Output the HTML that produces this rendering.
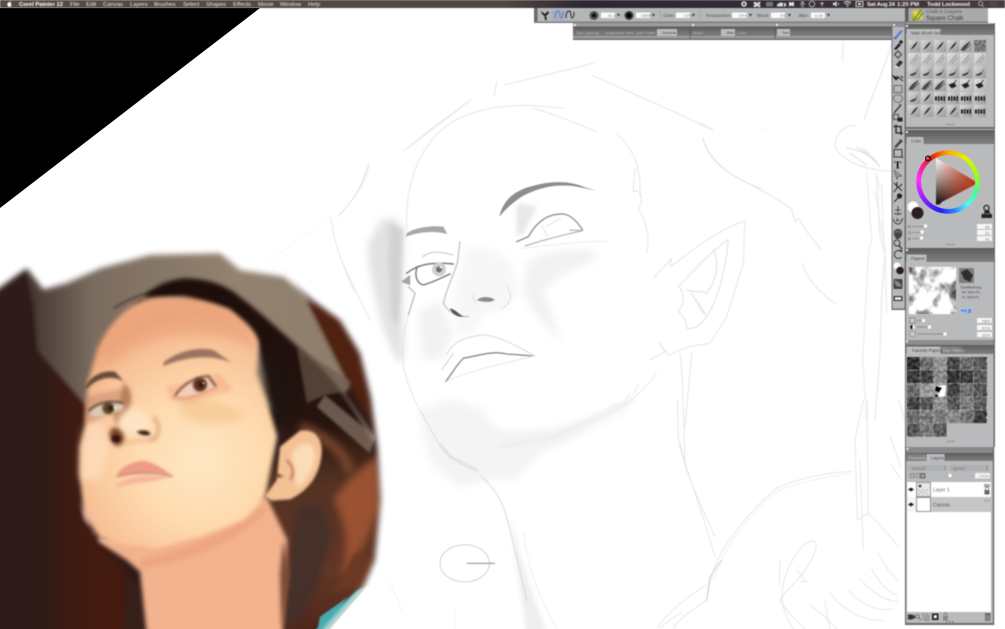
<!DOCTYPE html>
<html><head><meta charset="utf-8"><style>
html,body{margin:0;padding:0;background:#fff;width:1005px;height:629px;overflow:hidden}
svg{position:absolute;left:0;top:0}
text{font-family:"Liberation Sans",sans-serif}
#wheel{position:absolute;left:915.5px;top:150px;width:64px;height:64px;border-radius:50%;background:conic-gradient(from 0deg,#ffa800,#e8f000 35deg,#90ff20 80deg,#40ff90 110deg,#50f8ff 140deg,#2878ff 170deg,#2020f0 195deg,#9020ff 235deg,#ff30ff 275deg,#f02060 310deg,#e81808 325deg,#ffa800);-webkit-mask:radial-gradient(circle,transparent 26.5px,#000 27.5px,#000 31.5px,transparent 32.5px);mask:radial-gradient(circle,transparent 26.5px,#000 27.5px,#000 31.5px,transparent 32.5px);filter:blur(.5px)}
</style></head><body>
<svg width="1005" height="629" viewBox="0 0 1005 629" xmlns="http://www.w3.org/2000/svg">
<defs>
<filter id="b1" x="-40%" y="-40%" width="180%" height="180%" color-interpolation-filters="sRGB"><feGaussianBlur stdDeviation="3"/></filter>
<filter id="b2" x="-40%" y="-40%" width="180%" height="180%" color-interpolation-filters="sRGB"><feGaussianBlur stdDeviation="6"/></filter>
<filter id="b3" x="-10%" y="-10%" width="120%" height="120%" color-interpolation-filters="sRGB"><feGaussianBlur stdDeviation="9"/></filter>
<filter id="b4" x="-50%" y="-50%" width="200%" height="200%" color-interpolation-filters="sRGB"><feGaussianBlur stdDeviation="12"/></filter>
<filter id="b8" x="-60%" y="-60%" width="220%" height="220%" color-interpolation-filters="sRGB"><feGaussianBlur stdDeviation="24"/></filter>
<filter id="ph" filterUnits="userSpaceOnUse" x="-60" y="-60" width="1300" height="1300" color-interpolation-filters="sRGB"><feGaussianBlur stdDeviation="2"/></filter>
<filter id="sk" filterUnits="userSpaceOnUse" x="0" y="0" width="1005" height="629" color-interpolation-filters="sRGB"><feGaussianBlur stdDeviation=".6"/></filter>
<filter id="ui" x="-2%" y="-2%" width="104%" height="104%" color-interpolation-filters="sRGB"><feGaussianBlur stdDeviation=".5"/></filter>
<filter id="nz" x="0" y="0" width="100%" height="100%" color-interpolation-filters="sRGB"><feTurbulence type="fractalNoise" baseFrequency=".3" numOctaves="3" seed="4"/><feColorMatrix values="2.4 0 0 0 -.7 2.4 0 0 0 -.7 2.4 0 0 0 -.7 0 0 0 0 1"/></filter>
<filter id="cl" x="0" y="0" width="100%" height="100%" color-interpolation-filters="sRGB"><feTurbulence type="fractalNoise" baseFrequency=".06" numOctaves="4" seed="9"/><feColorMatrix values="2.4 0 0 0 -.25 2.4 0 0 0 -.25 2.4 0 0 0 -.25 0 0 0 0 1"/></filter>
<filter id="fine" x="0" y="0" width="100%" height="100%" color-interpolation-filters="sRGB"><feTurbulence type="fractalNoise" baseFrequency=".9" numOctaves="2" seed="3"/><feColorMatrix values="2 0 0 0 -.5 2 0 0 0 -.5 2 0 0 0 -.5 0 0 0 0 1"/></filter>
<mask id="pm" maskUnits="userSpaceOnUse" x="-100" y="-100" width="1500" height="1500"><path filter="url(#b3)" fill="#fff" d="M-60,185 L80,85 L130,150 L200,130 L300,85 L450,45 L660,40 L720,90 L850,110 L950,190 L1020,240 L1080,340 L1112,470 L1132,620 L1142,780 L1124,960 L1090,1040 L940,1210 L-60,1210Z"/></mask>
<linearGradient id="rb" x1="0" x2="1" y1="0" y2="0"><stop offset="0" stop-color="#2e1b1a"/><stop offset=".3" stop-color="#2f1b18"/><stop offset=".6" stop-color="#3f1b12"/><stop offset="1" stop-color="#471b0e"/></linearGradient>
<linearGradient id="wl" x1="0" x2="1" y1="0" y2="0"><stop offset="0" stop-color="#3f302c"/><stop offset=".2" stop-color="#7b6c60"/><stop offset=".6" stop-color="#93826f"/><stop offset="1" stop-color="#8d7c6c"/></linearGradient>
<linearGradient id="hr" x1="0" x2="0" y1="0" y2="1"><stop offset="0" stop-color="#1c0e0b"/><stop offset=".4" stop-color="#27140f"/><stop offset=".56" stop-color="#543222"/><stop offset=".8" stop-color="#643726"/><stop offset="1" stop-color="#4a2417"/></linearGradient>
<radialGradient id="fc" gradientUnits="userSpaceOnUse" cx="600" cy="660" r="440"><stop offset="0" stop-color="#ffe8c4"/><stop offset=".45" stop-color="#fedaae"/><stop offset=".8" stop-color="#f8c298"/><stop offset="1" stop-color="#eeaa80"/></radialGradient>
<linearGradient id="nk" x1="0" x2="0" y1="0" y2="1"><stop offset="0" stop-color="#f3b28c"/><stop offset="1" stop-color="#f4b490"/></linearGradient>
<linearGradient id="top" x1="0" x2="1" y1="0" y2="0"><stop offset="0" stop-color="#554c43"/><stop offset=".5" stop-color="#514842"/><stop offset=".58" stop-color="#2d2731"/><stop offset=".75" stop-color="#332c36"/><stop offset="1" stop-color="#473d3c"/></linearGradient>
<linearGradient id="hd" x1="0" x2="0" y1="0" y2="1"><stop offset="0" stop-color="#5b5b5b"/><stop offset=".5" stop-color="#6f6f6f"/><stop offset="1" stop-color="#808080"/></linearGradient>
<linearGradient id="cell" x1="0" x2="1" y1="0" y2="1"><stop offset="0" stop-color="#dcdcdd"/><stop offset="1" stop-color="#979799"/></linearGradient>
<linearGradient id="cell2" x1="0" x2="1" y1="0" y2="1"><stop offset="0" stop-color="#e3e3e4"/><stop offset="1" stop-color="#b5b5b7"/></linearGradient>
<linearGradient id="tw" x1="0" x2="0" y1="158" y2="205" gradientUnits="userSpaceOnUse"><stop offset="0" stop-color="#fff"/><stop offset=".45" stop-color="#a89a96"/><stop offset="1" stop-color="#0a0505"/></linearGradient>
<linearGradient id="tr" x1="936" x2="978" y1="0" y2="0" gradientUnits="userSpaceOnUse"><stop offset="0" stop-color="#c53210" stop-opacity="0"/><stop offset="1" stop-color="#c12d0c" stop-opacity="1"/></linearGradient>
<linearGradient id="ch" x1="0" x2="1" y1="1" y2="0"><stop offset="0" stop-color="#7c8c30"/><stop offset=".5" stop-color="#e3d850"/><stop offset="1" stop-color="#9aa548"/></linearGradient>
<symbol id="s1" viewBox="0 0 12 12" overflow="visible"><rect width="12" height="12" fill="url(#cell)"/><path d="M2.5,10 C4,7 7,3.5 9.5,1.5 C9,4.5 6,8 2.5,10Z" fill="#252525"/></symbol>
<symbol id="s2" viewBox="0 0 12 12" overflow="visible"><rect width="12" height="12" fill="url(#cell2)"/><path d="M2,10.5 L9.5,1.5 M5,10.5 L10.5,4" stroke="#8a8a8c" stroke-width=".8" fill="none"/></symbol>
<symbol id="s3" viewBox="0 0 12 12" overflow="visible"><rect width="12" height="12" fill="url(#cell)"/><path d="M1.5,9 C4,7.5 6,7.5 8,6 L10.5,1.5 L8,7.5 C6,10 3,10 1.5,9Z" fill="#333"/></symbol>
<symbol id="s4" viewBox="0 0 12 12" overflow="visible"><rect width="12" height="12" fill="url(#cell2)"/><path d="M2,6 L5,9 L9,7 L7,4 Z M9.5,1 L5,7" fill="#222" stroke="#222" stroke-width=".8"/></symbol>
<symbol id="s5" viewBox="0 0 12 12" overflow="visible"><rect width="12" height="12" fill="url(#cell)"/><path d="M1,4.5h2v4H1zM4,4h1.5v5H4zM6.5,4.5h2v4h-2zM9.5,4h1.5v5H9.5z" fill="#1e1e1e"/></symbol>
<symbol id="sd" viewBox="0 0 12 12" overflow="visible"><rect width="12" height="12" fill="url(#cell)"/><path d="M1,10 L4,6 L10,1.5 L6.5,7 L3,10.5Z M4,11 L11,4" fill="#4a4a4a" stroke="#333" stroke-width=".6"/></symbol>
<clipPath id="gclip"><path d="M907,357h80v53h-80zM907,410h40v27h-40zM947,410h40v13h-40z"/></clipPath>
<clipPath id="pclip"><rect x="909" y="267" width="47" height="47" rx="1"/></clipPath>
</defs>

<rect width="1005" height="629" fill="#fff"/>
<path d="M0,8 L260,8 L0,208Z" fill="#000"/>

<g filter="url(#sk)">
<g transform="translate(340,60) scale(.33333)">
<path d="M125,480 C165,465 182,490 192,510 L186,640 L190,900 C175,925 150,860 125,790 C105,700 80,600 85,550Z" fill="#e2e2e3" filter="url(#b4)"/>
<path d="M150,490 L188,510 L182,700 L172,800 L155,770 L145,600Z" fill="#d2d2d3" filter="url(#b2)"/>
<path d="M560,610 C600,580 700,560 755,570 L770,600 C700,625 650,650 610,690 L665,850 C620,800 575,760 550,690Z" fill="#f2f2f3" filter="url(#b4)"/>
<path d="M375,570 C420,550 490,575 515,615 L535,690 L500,740 L430,765 L400,820 L350,825 L335,720Z" fill="#f7f7f8" filter="url(#b4)"/>
<path d="M235,760 L300,720 L340,820 L300,900 L250,900Z" fill="#f2f2f3" filter="url(#b4)"/>
<path d="M530,430 L590,440 L550,520 L530,530Z" fill="#e8e8e9" filter="url(#b2)"/>
<path d="M300,1020 C340,1030 385,1010 380,1060 C390,1100 500,1145 750,1095 C660,1170 520,1180 440,1210 L345,1210 C315,1150 290,1080 300,1020Z" fill="#f5f5f6" filter="url(#b4)"/>
<g fill="none" stroke="#e2e2e2" stroke-width="2.6" stroke-linecap="round" stroke-linejoin="round">
<path d="M200,510 C195,380 230,260 330,190 C430,130 550,130 670,145"/>
<path d="M580,145 C640,160 720,195 770,215"/>
<path d="M195,270 C260,215 330,165 395,118"/>
<path d="M462,110 L470,65"/>
<path d="M495,75 L760,10"/>
<path d="M755,45 C850,90 1000,150 1115,210"/>
<path d="M1088,235 C1110,310 1190,360 1262,385"/>
<path d="M828,220 C880,265 905,320 900,410"/>
<path d="M885,325 L880,395 C910,385 910,430 895,445 C920,490 930,530 920,580"/>
<path d="M85,315 C70,370 40,420 0,465"/>
<path d="M0,590 C30,660 70,740 90,780"/>
<path d="M940,655 L995,595 L990,620 C1060,570 1130,510 1215,482 L1210,610 L1160,770 L1110,850 L1045,860 L985,885 L955,845 L975,875 L930,900"/>
<path d="M1035,660 C1080,610 1120,570 1165,538 C1160,610 1140,690 1115,745 C1090,790 1070,810 1040,805 C1040,770 1020,770 1015,750 C1040,730 1030,690 1015,680Z" stroke="#dcdcdc"/>
<path d="M1120,570 C1140,610 1130,660 1100,700 M1040,690 C1060,700 1090,690 1100,700 M1070,720 L1100,770 M1055,700 L1090,760" stroke="#e6e6e6" stroke-width="4"/>
<path d="M1020,880 C1030,950 1030,1080 1035,1200"/>
<path d="M1056,875 L1035,1100"/>
<path d="M205,770 C190,820 180,880 195,940 C220,1030 270,1110 320,1170 L345,1200"/>
<path d="M740,1090 C830,1060 900,1010 950,940" stroke="#e8e8e8"/>
<path d="M800,1050 L830,1030 M850,1030 L870,1000 M880,1005 L895,975" stroke="#e8e8e8"/>
</g>
<path d="M478,470 C490,420 520,395 570,380 C620,365 680,358 735,382 L770,392 L700,378 C640,372 590,385 545,410 C515,430 490,455 478,470Z" fill="#8d8d8f"/>
<path d="M200,520 C220,505 270,495 310,500 L322,522 C280,510 230,518 198,530Z" fill="#a8a8a9"/>
<g fill="none" stroke-linecap="round">
<path d="M530,545 L565,530 C590,485 625,460 670,462 C695,465 715,490 728,510" stroke="#8e8e90" stroke-width="4"/>
<path d="M555,558 C610,540 670,525 728,512 L690,510" stroke="#a8a8aa" stroke-width="3"/>
<path d="M605,495 L622,528 M620,500 L660,475" stroke="#dedede" stroke-width="2.5"/>
<path d="M545,565 C600,560 740,540 800,545" stroke="#ececec" stroke-width="3"/>
<path d="M200,640 C230,615 270,605 340,612" stroke="#7c7c7e" stroke-width="4.5"/>
<path d="M232,620 C222,645 230,670 250,675 C285,665 310,650 330,642" stroke="#707072" stroke-width="4"/>
<path d="M248,590 C275,570 300,575 340,585" stroke="#c6c6c7" stroke-width="3"/>
<path d="M360,545 L352,610 L318,700 L310,730 C325,755 345,770 385,770" stroke="#c4c4c6" stroke-width="4"/>
<path d="M205,680 L225,700 L205,765" stroke="#bcbcbe" stroke-width="4"/>
<path d="M185,665 L210,645 L210,675Z" fill="#a4a4a6" stroke="#a4a4a6"/>
</g>
<circle cx="297" cy="628" r="21" fill="#cfcfd1"/><circle cx="297" cy="628" r="9" fill="#6c6c6e"/><circle cx="302" cy="622" r="3.5" fill="#eee"/>
<path d="M330,745 C340,745 355,760 370,770 C350,772 335,760 330,745Z" fill="#55555a"/>
<path d="M410,720 C425,708 450,708 465,720 C445,730 425,725 410,720Z" fill="#8c8c8e"/>
<path d="M500,680 C525,710 505,740 480,748 M410,730 C400,720 395,710 405,700" fill="none" stroke="#dcdcdc" stroke-width="3"/>
<g fill="none" stroke-linecap="round" stroke-linejoin="round">
<path d="M317,965 C340,935 345,920 370,895 C420,885 460,872 500,882 L582,888" stroke="#88888a" stroke-width="4"/>
<path d="M318,885 C335,855 360,835 400,830 C440,815 490,835 580,885" stroke="#dadadb" stroke-width="3"/>
<path d="M318,965 C390,930 500,910 580,888" stroke="#e6e6e6" stroke-width="3"/>
<path d="M340,880 L305,930" stroke="#cecece" stroke-width="3"/>
</g>
</g>

<g transform="translate(260,60) scale(.33333)" fill="none" stroke="#e6e6e6" stroke-width="2.6" stroke-linecap="round">
<path d="M328,312 C315,370 280,425 232,470"/>
<path d="M213,472 C220,550 255,630 285,700"/>
<path d="M210,470 L20,610" stroke="#f6f6f6"/>
<path d="M432,272 L600,145"/>
</g>

<g transform="translate(380,400) scale(.33333)">
<path d="M120,20 L300,20 L350,90 C420,110 560,90 750,10 C720,60 560,110 480,160 L400,240 L320,240 L240,260 L160,200 C130,130 120,70 120,20Z" fill="#f4f4f5" filter="url(#b4)"/>
<path d="M385,330 C405,420 435,520 500,700 L440,700 C420,560 400,430 385,330Z" fill="#eeeeef" filter="url(#b2)"/>
<path d="M120,30 L170,120 C200,170 240,195 295,215" fill="none" stroke="#e4e4e5" stroke-width="4"/>
<path d="M180,130 L210,170 L290,210" fill="none" stroke="#dadadb" stroke-width="5" filter="url(#b1)"/>
<path d="M300,225 C345,265 370,305 385,370 L412,480 L440,600" fill="none" stroke="#dadadb" stroke-width="3"/>
<path d="M432,400 C435,470 470,580 530,687" fill="none" stroke="#f0f0f0" stroke-width="3"/>
<path d="M360,140 L520,110 L760,0" fill="none" stroke="#ececed" stroke-width="10" filter="url(#b2)"/>
<ellipse cx="254" cy="490" rx="74" ry="56" fill="none" stroke="#cdcdcd" stroke-width="2.6"/>
<path d="M260,490 L345,490" stroke="#8a8a8a" stroke-width="3"/>
<g fill="none" stroke="#e4e4e4" stroke-width="2.6" stroke-linecap="round">
<path d="M892,0 L895,110 C905,190 950,290 1005,410"/>
<path d="M900,130 C920,220 960,310 1005,470"/>
<path d="M1415,215 C1340,215 1240,240 1190,265 C1120,320 1050,410 1015,475 C990,530 985,570 980,605"/>
<path d="M1405,222 C1320,235 1220,250 1170,290 C1100,360 1040,430 1000,540" stroke="#eeeeee"/>
<path d="M1025,480 L990,530 L980,600" stroke="#c8c8c9"/>
<path d="M980,555 C920,590 870,630 830,685 M980,600 C940,630 900,650 880,685 M905,640 C880,650 860,665 840,685"/>
<path d="M30,545 L70,640 M225,630 L225,687" stroke="#f2f2f2"/>
<path d="M1305,425 C1280,415 1240,460 1215,530 C1200,590 1200,620 1240,687 M1305,425 C1320,440 1285,500 1260,530 C1235,560 1205,585 1200,600 C1215,630 1250,660 1275,687"/>
<path d="M1200,480 L1198,560 M1250,510 L1280,545 L1260,545"/>
<path d="M1290,615 C1320,640 1350,660 1370,687 M1350,580 C1390,630 1440,660 1510,662 M1405,570 C1440,610 1490,640 1540,625 M1440,535 C1470,575 1510,600 1552,605 M1475,505 C1490,540 1520,575 1552,585 M1495,460 C1510,490 1530,520 1555,545 M1335,605 L1350,687"/>
<path d="M1462,0 L1462,110 M1450,0 L1425,120 L1432,360 L1465,340 L1462,110 M1440,180 L1450,450 M1462,340 C1490,360 1530,410 1552,435 M1530,110 C1545,150 1555,170 1560,200 M1535,195 L1560,235"/>
</g>
</g>

<g transform="translate(700,20) scale(.33333)" fill="none" stroke="#e0e0e0" stroke-width="2.6" stroke-linecap="round" stroke-linejoin="round">
<path d="M428,65 L428,125"/>
<path d="M0,310 C15,315 30,320 40,330" stroke="#eaeaea"/>
<path d="M8,355 C25,420 80,460 145,490 C200,520 240,540 275,568 L285,605 L295,595 L325,640 L362,688"/>
<path d="M308,730 C325,790 370,825 408,852"/>
<path d="M175,328 L195,330" stroke="#f0f0f0"/>
<path d="M575,70 C560,130 520,215 492,298"/>
<path d="M470,318 C430,312 405,345 405,375 C410,395 420,405 445,420 C480,445 530,450 576,455"/>
<path d="M440,385 C490,390 515,410 540,440 M470,380 L505,405 M490,385 L530,425 M450,400 L500,435" stroke="#d8d8d8"/>
<path d="M530,470 L540,650 L555,700 L545,830 L540,1000 L525,1200"/>
<path d="M525,515 L555,690 L560,880 M545,490 L552,680 M500,460 L515,660 L505,700 L488,1020 L500,1200 M530,460 L540,510" stroke="#e6e6e6"/>
<path d="M595,1140 L615,1200"/>
</g>
</g>

<!-- photo -->
<g transform="translate(0,240) scale(.33333)" mask="url(#pm)"><g filter="url(#ph)">
<rect x="-20" y="0" width="1250" height="1230" fill="#fff"/>
<path d="M-40,100 L90,40 L1170,40 L1190,1230 L-40,1230Z" fill="#2e1b1a"/>
<path d="M0,320 L110,320 L270,500 L240,800 L380,1000 L380,1230 L0,1230Z" fill="url(#rb)" filter="url(#b4)"/>
<path d="M70,70 L130,150 L200,120 L300,60 L450,20 L660,20 L720,70 L860,90 L940,190 L1060,430 L1030,460 L1125,590 L1100,640 L800,500 L700,250 L420,180 L300,310 L260,500 L110,330 L100,200Z" fill="url(#wl)" filter="url(#b2)"/>
<path d="M920,180 L1030,230 L1090,340 L1125,570 L1050,440 Z" fill="#4e2111" filter="url(#b2)"/>
<!-- hair -->
<path d="M300,310 C330,260 370,220 420,190 L370,240 L300,340Z" fill="#5e4538" filter="url(#b2)"/>
<path d="M340,205 C380,180 420,165 470,150" stroke="#4e3a30" stroke-width="5" fill="none" filter="url(#b1)"/>
<path d="M430,175 C450,145 500,118 560,115 C620,118 660,130 700,155 C800,230 880,310 960,380 C1030,450 1100,560 1135,650 L1150,800 L1125,960 L1095,1040 L945,1170 L830,1210 L840,1000 L850,900 L780,760 L860,580 L770,300 L690,210 L550,170Z" fill="url(#hr)" filter="url(#b2)"/>
<path d="M890,320 L1055,425 L1030,455 L975,465 L920,490 Z" fill="#6d5a4d" opacity=".65" filter="url(#b1)"/>
<path d="M975,465 L1125,590 L1110,640 L950,500Z" fill="#8a7567" opacity=".7" filter="url(#b1)"/>
<path d="M1000,780 C1030,730 1075,690 1130,650 L1145,790 L1100,900 L1020,1025 C1040,950 1050,870 1000,780Z" fill="#9a5232" filter="url(#b4)"/>
<path d="M900,560 C980,590 1040,640 1050,700" fill="none" stroke="#7a4830" stroke-width="28" filter="url(#b4)"/>
<path d="M880,870 L895,800 L960,790 L995,880 L955,1030 L900,1140 L850,1160 Z" fill="#45302a" filter="url(#b4)"/>
<path d="M1060,940 C1050,990 1010,1040 990,1060 L1090,1040 L1120,950Z" fill="#6b3823" filter="url(#b2)"/>
<path d="M780,320 L900,460 L830,580 L800,470Z" fill="#1f1410" filter="url(#b4)"/>
<path d="M375,1010 L420,1040 L445,1230 L370,1230Z" fill="#38201a" filter="url(#b2)"/>
<!-- neck -->
<path d="M380,960 L290,900 L800,770 L862,900 L845,1230 L445,1230 L420,995Z" fill="url(#nk)" filter="url(#b2)"/>
<path d="M840,1000 L850,900 L870,1000 L845,1170 Z" fill="#7a4a34" filter="url(#b2)"/>
<!-- teal -->
<path d="M945,1170 L1070,1052 L1095,1040 L980,1170Z" fill="#4fb2b2"/>
<path d="M960,1130 L1045,1070 L950,1180Z" fill="#47a9ac"/>
<path d="M955,1210 L1100,1040 L1180,1040 L1180,1230 L955,1230Z" fill="#fff"/>
<!-- ear -->
<path d="M840,620 L900,572 C940,565 968,590 965,640 C960,700 930,750 870,778 L815,782 L795,768 L830,720Z" fill="#f4c195" filter="url(#b1)"/>
<path d="M875,640 C900,600 940,600 945,640 C945,690 920,720 890,745" fill="#fcdcb6" filter="url(#b2)"/>
<path d="M860,660 C880,680 885,700 870,720" fill="none" stroke="#c77f5c" stroke-width="7" filter="url(#b1)"/>
<path d="M830,700 L852,710 L830,712Z" fill="#593020" filter="url(#b1)"/>
<!-- face -->
<path d="M290,330 C310,280 360,210 420,185 C470,165 590,165 690,210 C730,240 770,270 775,310 L770,400 L800,480 L832,590 L795,770 L735,840 L600,890 L470,925 L380,915 L300,895 L252,825 L238,700 L240,620 L255,560 L262,430Z" fill="url(#fc)" filter="url(#b2)"/>
<path d="M290,330 C330,250 420,180 560,175 C680,200 760,270 772,330 C650,260 450,260 330,370Z" fill="#e99f78" opacity=".45" filter="url(#b4)"/>
<path d="M240,780 L280,880 L370,945 L300,900 L255,840Z" fill="#e8d5dc" filter="url(#b2)"/>
<path d="M240,620 L255,560 L300,540 L330,620 L300,720 L240,720Z" fill="#ffe5c8" opacity=".6" filter="url(#b4)"/>
<!-- shadows -->
<path d="M530,475 C610,475 680,485 740,525 C680,560 600,560 550,530Z" fill="#eab070" opacity=".35" filter="url(#b4)"/>
<path d="M500,440 L660,400 L700,450 L570,490 L510,480Z" fill="#f0a07c" opacity=".45" filter="url(#b2)"/>
<path d="M370,430 C395,440 400,480 385,510 L350,560 L335,510 L360,480Z" fill="#a96a48" opacity=".8" filter="url(#b2)"/>
<path d="M255,470 L370,445 L385,490 L290,540 L255,550Z" fill="#bd8264" opacity=".5" filter="url(#b2)"/>
<!-- brows -->
<path d="M490,368 C530,335 590,320 640,330 L695,368 C640,345 570,345 490,378Z" fill="#9a7460" filter="url(#b1)"/>
<path d="M255,445 C270,405 310,390 345,395 L372,425 C340,405 295,410 262,445Z" fill="#654838" filter="url(#b1)"/>
<!-- right eye -->
<path d="M525,470 C540,440 580,412 620,408 L648,440 C610,460 570,470 525,470Z" fill="#f2cdbc" filter="url(#b1)"/>
<circle cx="600" cy="434" r="21" fill="#5e3620" filter="url(#b1)"/>
<circle cx="603" cy="434" r="7" fill="#1c0e0a" filter="url(#b1)"/><circle cx="610" cy="430" r="3" fill="#e8d0b8"/>
<path d="M525,468 C545,435 585,410 625,408 L648,440" fill="none" stroke="#57301e" stroke-width="5" filter="url(#b1)"/>
<path d="M515,470 C540,480 590,475 648,442" fill="none" stroke="#ea9f80" stroke-width="6" filter="url(#b1)"/>
<!-- left eye -->
<path d="M265,515 C285,490 330,478 370,490 L368,508 C340,522 300,532 278,530Z" fill="#dcc8b4" filter="url(#b1)"/>
<circle cx="325" cy="505" r="18" fill="#5e4626" filter="url(#b1)"/>
<circle cx="331" cy="505" r="7" fill="#231408" filter="url(#b1)"/><circle cx="345" cy="503" r="4" fill="#f5e8d8"/>
<path d="M265,515 C285,490 330,478 370,490" fill="none" stroke="#3e2a1e" stroke-width="5" filter="url(#b1)"/>
<!-- nose -->
<ellipse cx="400" cy="545" rx="50" ry="40" fill="#ffe8cc" opacity=".8" filter="url(#b4)"/>
<path d="M330,575 C335,560 350,560 360,570 C380,590 375,615 350,618 C335,610 325,595 330,575Z" fill="#7a3e2a" filter="url(#b2)"/>
<ellipse cx="348" cy="596" rx="13" ry="11" fill="#2e140e" filter="url(#b1)"/>
<path d="M410,575 C420,570 445,568 452,582 C440,590 420,585 410,575Z" fill="#3a1a14" filter="url(#b1)"/>
<path d="M460,530 C485,560 480,590 450,600" fill="none" stroke="#d18a62" stroke-width="6" filter="url(#b2)"/>
<path d="M370,610 C410,600 440,605 470,595" fill="none" stroke="#dfa47c" stroke-width="5" filter="url(#b2)"/>
<!-- mouth -->
<path d="M350,708 C360,680 395,668 425,662 C460,665 495,690 518,708 C470,696 410,696 350,708Z" fill="#ec9c86" filter="url(#b1)"/>
<path d="M345,742 C365,715 410,700 515,710 C470,725 400,730 345,742Z" fill="#f7b79e" filter="url(#b1)"/>
<path d="M350,710 C400,695 460,695 518,710" fill="none" stroke="#a76752" stroke-width="3" filter="url(#b1)"/>
<!-- neck shadow -->
<path d="M420,960 C520,935 660,900 790,800 L800,810 C700,920 540,970 420,985Z" fill="#e08f68" opacity=".35" filter="url(#b2)"/>
</g></g>

<!-- UI -->
<g filter="url(#ui)">
<rect width="1005" height="8" fill="url(#top)"/>
<path d="M8,2.5c.8-.4 1.4-.1 1.8,0c.4-.1 1-.4 1.6 0c-.8.7-.8 2 .2 2.5c-.3 1-1 1.9-1.7 1.7c-.5-.2-.7-.2-1.2 0c-.8.2-2.2-2.5-.7-4.2zM9.7,2c0-.7.5-1.2 1-1.2c0 .7-.5 1.2-1 1.2z" fill="#fff"/>
<g fill="#eeeae4" font-size="5.9">
<text x="19" y="6" font-weight="bold" fill="#fff" textLength="44">Corel Painter 12</text>
<text x="70" y="6">File</text><text x="86" y="6">Edit</text><text x="103" y="6">Canvas</text><text x="130" y="6">Layers</text><text x="154" y="6">Brushes</text><text x="183" y="6">Select</text><text x="206" y="6">Shapes</text><text x="233" y="6">Effects</text><text x="258" y="6">Movie</text><text x="280" y="6">Window</text><text x="308" y="6">Help</text>
</g>
<g fill="#f2f2f2" font-size="5.9">
<text x="867" y="6" font-weight="bold" textLength="28">Sat Aug 24</text><text x="897" y="6" font-weight="bold" textLength="22">1:20 PM</text><text x="927" y="6" font-weight="bold" textLength="43">Todd Lockwood</text>
</g>
<g fill="#d8d8d8" stroke="none">
<circle cx="744" cy="4" r="2.8"/><circle cx="744" cy="4" r="1.1" fill="#333"/>
<path d="M755,1.5l2,1.5l2-1.5l2,1.5l-2,1.5l2,1.5l-2,1.5l-2-1.5l-2,1.5l-2-1.5l2-1.5l-2-1.5z"/>
<rect x="766" y="2" width="7" height="4.5" rx="1" fill="#777"/>
<path d="M777,6.5v-2l3-2h3v4zM784,3h2v3.5h-2z"/>
<path d="M789,6.5v-4.5h1.5l1,1l1,-1h1.5v4.5l-1.5-.8h-2z" fill="#e8e8e8"/>
<path d="M801,1.5h3v2h-3zM800,4h5v1h-5zM801,6h3v1h-3z" fill="#aaa"/>
<circle cx="812" cy="4" r="2.8" fill="none" stroke="#bbb" stroke-width=".9"/>
<path d="M822,1.5v5M820,3.5h4" stroke="#bbb" stroke-width=".9"/>
<path d="M833,3h1.5l2-1.5v5l-2-1.5h-1.5zM838,2.5c1,1 1,2 0,3" fill="#ddd" stroke="#ddd" stroke-width=".3"/>
<path d="M844,3c2-2 5-2 7,0M845.5,4.5c1-1 3-1 4,0" fill="none" stroke="#ddd" stroke-width=".9"/><circle cx="847.5" cy="6" r=".8"/>
<rect x="856" y="1.5" width="7" height="5" fill="none" stroke="#ddd" stroke-width=".9"/><rect x="858" y="3" width="3" height="2"/>
<circle cx="980.5" cy="3.5" r="2" fill="none" stroke="#bbb" stroke-width=".8"/><path d="M982,5l2,2" stroke="#bbb" stroke-width=".8"/>
<path d="M990,2.5h7M990,4h7M990,5.5h7" stroke="#55505a" stroke-width=".9"/>
</g>

<rect x="534" y="8" width="371" height="14" fill="#b6b7b9"/>
<rect x="534" y="8" width="3.5" height="14" fill="#6a6a6a"/>
<rect x="534" y="21.5" width="371" height="1.5" fill="#7c7c7c"/>
<path d="M541,11 L545,14 L548,11 L549,13 L546,16 L547,20 L545,20 L544.5,16 L542,14Z" fill="#222"/>
<path d="M566,18 C566,13 567,11 569,11 C572,11 570,18 572,18 C574,18 574,14 574,12" fill="none" stroke="#2c2c2c" stroke-width="1"/>
<path d="M577,19 L585,11 L586,13 L579,20Z" fill="#c2c2c4" stroke="#8e8e8e" stroke-width=".5"/>
<path d="M590,9.5v11M700,9.5v11M660,9.5v11" stroke="#949496" stroke-width=".5"/>
<rect x="552" y="10" width="13" height="10.5" fill="#a9adb9"/>
<path d="M555,18 C555,13 556,11 558,11 C561,11 559,18 561,18 C563,18 563,14 563,12" fill="none" stroke="#4d80cf" stroke-width="1"/>
<circle cx="594" cy="15.5" r="4.5" fill="#545456"/><circle cx="594" cy="15.5" r="2" fill="#0c0c0c"/>
<circle cx="629" cy="15.5" r="4.5" fill="#3b3b3b"/><circle cx="629" cy="15.5" r="2.5" fill="#000"/>
<g fill="#fafafa">
<rect x="601" y="12.5" width="14" height="5.5"/><rect x="636" y="12.5" width="14" height="5.5"/><rect x="676" y="12.5" width="14" height="5.5"/><rect x="732" y="12.5" width="15" height="5.5"/><rect x="771" y="12.5" width="14" height="5.5"/><rect x="811" y="12.5" width="14" height="5.5"/>
</g>
<g font-size="4" fill="#777">
<text x="608" y="17">41.0</text><text x="641" y="17">100%</text><text x="684" y="17">12%</text><text x="739" y="17">24%</text><text x="780" y="17">0%</text><text x="815" y="17">0.00</text>
</g>
<g fill="#555" font-size="4.3">
<text x="663" y="17">Grain:</text><text x="706" y="17">Resaturation:</text><text x="757" y="17">Bleed:</text><text x="798" y="17">Jitter:</text>
</g>
<g fill="#333"><path d="M617,14h3l-1.5,2.5zM652,14h3l-1.5,2.5zM692,14h3l-1.5,2.5zM749,14h3l-1.5,2.5zM788,14h3l-1.5,2.5zM827,14h3l-1.5,2.5z"/></g>

<rect x="905" y="8" width="83" height="14" fill="#a8a9ab"/>
<rect x="905" y="8" width="3.5" height="14" fill="#5e5e5e"/>
<rect x="905" y="21.5" width="83" height="1.5" fill="#7c7c7c"/>
<path d="M912,21 L912,12 L916,9.5 L923,9.5 L923,18 L917,21Z" fill="url(#ch)"/>
<path d="M914,20 L921,10 M917,20 L923,13" stroke="#4a5a22" stroke-width=".7"/>
<text x="926" y="13" font-size="4.8" fill="#555">Chalk &amp; Crayons</text>
<text x="926" y="20" font-size="6.2" fill="#3e3e3e">Square Chalk</text>

<rect x="573" y="23" width="319" height="17" fill="#9c9c9e"/>
<rect x="573" y="26.5" width="319" height="9.5" fill="url(#hd)"/>
<rect x="573" y="38.5" width="319" height="1.5" fill="#6a6a6a"/>
<rect x="574" y="24" width="2" height="2" fill="#eee"/><rect x="692" y="24" width="2" height="2" fill="#eee"/><rect x="776" y="24" width="2" height="2" fill="#eee"/>
<path d="M690,26v13M775,26v13" stroke="#555" stroke-width=".7"/>
<rect x="657" y="29" width="20" height="7" fill="#bdbdbf"/><rect x="721" y="29" width="14" height="7" fill="#bdbdbf"/><rect x="777" y="29" width="13" height="7" fill="#bdbdbf"/>
<g font-size="3.9" fill="#bbb">
<text x="576" y="34">Size</text><text x="585" y="34">Spacing</text><text x="605" y="34">Angle</text><text x="615" y="34">Noise</text><text x="626" y="34">Well</text><text x="636" y="34">Dab Profile</text>
<text x="662" y="34" fill="#444">General</text><text x="693" y="34">Brush</text><text x="726" y="34" fill="#444">Jitter</text><text x="737" y="34">Color</text><text x="782" y="34" fill="#444">Text</text>
</g>

<rect x="891.5" y="23" width="14" height="287" rx="1" fill="#b7b8ba"/>
<path d="M891.5,23h1v287h-1zM904.5,23h1v287h-1z" fill="#6c6c6c"/>
<rect x="891.5" y="308.5" width="14" height="1.5" fill="#6c6c6c"/>
<rect x="892" y="23" width="13" height="4" fill="#8e8e90"/><rect x="893" y="24" width="2" height="2" fill="#eee"/>
<g>
<path d="M894,38 L901,30 L903,31 L896,39Z" fill="#4c7fcf"/><path d="M893,39 L896,37 L896.5,39Z" fill="#2b5caa"/>
<path d="M894,49 L899,43 L901,45 L896,50Z" fill="#222"/><circle cx="901" cy="42" r="1.7" fill="#222"/>
<path d="M898,50 L902.5,54.5 L898,59 L893.5,54.5Z" fill="#555"/><path d="M898,52 L900.5,54.5 L898,57 L895.5,54.5Z" fill="#bbb"/>
<path d="M894,67 L900,60 L903,62.5 L897,69Z" fill="#333"/><path d="M894,67 L896,65 L899,67.5 L897,69Z" fill="#ddd"/>
<path d="M893,76 L898,78 L896,80Z M897,76 L903,81 M901,76 L903,78" fill="#222" stroke="#222" stroke-width="1"/>
<rect x="894" y="85.5" width="8" height="7" fill="none" stroke="#333" stroke-width=".9" stroke-dasharray="1.2 .8"/>
<ellipse cx="898" cy="98.5" rx="4.5" ry="3.8" fill="none" stroke="#333" stroke-width=".9" stroke-dasharray="1.2 .8"/>
<path d="M894,113 L901,105" stroke="#222" stroke-width="1.2"/><path d="M900,103v3M898.5,104.5h3" stroke="#555" stroke-width=".6"/>
<rect x="893.5" y="114.5" width="5" height="5" fill="none" stroke="#333" stroke-width=".8"/><rect x="897.5" y="117.5" width="5" height="4" fill="#222"/>
<path d="M896,124.5v8.5h7M893.5,126.5h7.5v8.5" fill="none" stroke="#222" stroke-width="1.3"/>
<path d="M894,147 L900,140 L902,142 L896,148Z" fill="#444"/><path d="M900,139.5l2.5,2" stroke="#222"/>
<rect x="894" y="149.5" width="8" height="7.5" fill="none" stroke="#333" stroke-width="1"/><path d="M902,157l1,1" stroke="#222"/>
<text x="894" y="168.5" font-weight="bold" font-size="11" fill="#111" style="font-family:'Liberation Serif',serif">T</text>
<path d="M894,170 L902,176 L898,176.5 L897,179.5Z" fill="#999" stroke="#333" stroke-width=".5"/>
<path d="M894,183 L902,191 M897,182 L897,188 L894,192 M902,184 L899,187" stroke="#222" stroke-width="1" fill="none"/>
<circle cx="899.5" cy="196" r="2.6" fill="#222"/><path d="M899,197 L894,202" stroke="#222" stroke-width="1"/>
<path d="M898,206v8M894.5,213c1,1.8 6,1.8 7,0M895,210l6,0" stroke="#333" stroke-width=".8" fill="none"/>
<path d="M893.5,219 C894,225 901,226 902,220 L903,218 M897,218v3l3-1" stroke="#333" stroke-width=".9" fill="none"/>
<path d="M894,235 L894,231 L896,229 L900,229 L902,231 L902,236 L899,239 L896,239Z" fill="#444"/><path d="M896,230v3M898,230v3M900,230v3" stroke="#ccc" stroke-width=".4"/>
<circle cx="897" cy="243" r="3" fill="none" stroke="#333" stroke-width="1"/><path d="M899,245.5 L902,249" stroke="#222" stroke-width="1.3"/>
<path d="M901.5,257 A4,4 0 1 1 901,251.5" fill="none" stroke="#333" stroke-width="1"/><path d="M899,250 L902,249.5 L902,253Z" fill="#333"/>
<circle cx="897" cy="266" r="3.5" fill="#fff"/><circle cx="900" cy="270.5" r="3.8" fill="#2c1c1c"/>
<rect x="893.5" y="279" width="9" height="10" rx="1" fill="#444"/><path d="M894,280 L899,282 L902,287 L896,286Z" fill="#8a8a8a"/>
<rect x="893.5" y="296" width="9" height="5" fill="#333"/><rect x="894.8" y="297.2" width="6.4" height="2.6" fill="#f2f2f2"/>
</g>

<rect x="905" y="23" width="90" height="106" fill="#b9babc"/>
<rect x="905" y="24" width="90" height="11" fill="url(#hd)"/>
<rect x="905" y="23" width="1" height="106" fill="#6a6a6a"/><rect x="994" y="23" width="1" height="106" fill="#6a6a6a"/><rect x="905" y="127" width="90" height="2.5" fill="#6a6a6a"/>
<rect x="906" y="25" width="2" height="2" fill="#eee"/>
<rect x="906.5" y="29" width="34" height="7" fill="#bcbdbf"/>
<text x="911" y="34.5" font-size="4.3" fill="#444">Main Brush Set</text>
<use href="#s1" x="908" y="40" width="12" height="12"/><use href="#s1" x="921" y="40" width="12" height="12"/><use href="#s1" x="934" y="40" width="12" height="12"/><use href="#s1" x="947" y="40" width="12" height="12"/><use href="#sd" x="960" y="40" width="12" height="12"/>
<rect x="974" y="40" width="12" height="12" fill="#777"/><rect x="974" y="40" width="12" height="12" filter="url(#fine)" opacity=".55"/>
<use href="#s2" x="908" y="53" width="12" height="12"/><use href="#s2" x="921" y="53" width="12" height="12"/><use href="#s2" x="934" y="53" width="12" height="12"/><use href="#s2" x="947" y="53" width="12" height="12"/><use href="#s2" x="960" y="53" width="12" height="12"/><use href="#s2" x="974" y="53" width="12" height="12"/>
<use href="#s3" x="908" y="66" width="12" height="12"/><use href="#s3" x="921" y="66" width="12" height="12"/><use href="#s3" x="934" y="66" width="12" height="12"/><use href="#s3" x="947" y="66" width="12" height="12"/><use href="#s3" x="960" y="66" width="12" height="12"/><use href="#s3" x="974" y="66" width="12" height="12"/>
<use href="#sd" x="908" y="79" width="12" height="12"/><use href="#sd" x="921" y="79" width="12" height="12"/><use href="#sd" x="934" y="79" width="12" height="12"/><use href="#s4" x="947" y="79" width="12" height="12"/><use href="#s4" x="960" y="79" width="12" height="12"/><use href="#s4" x="974" y="79" width="12" height="12"/>
<use href="#s3" x="908" y="92" width="12" height="12"/><use href="#s1" x="921" y="92" width="12" height="12"/><use href="#s5" x="934" y="92" width="12" height="12"/><use href="#s5" x="947" y="92" width="12" height="12"/><use href="#s5" x="960" y="92" width="12" height="12"/><use href="#s5" x="974" y="92" width="12" height="12"/>
<use href="#s1" x="908" y="105" width="12" height="12"/><use href="#s1" x="921" y="105" width="12" height="12"/><use href="#s1" x="934" y="105" width="12" height="12"/><use href="#s1" x="947" y="105" width="12" height="12"/><use href="#s5" x="960" y="105" width="12" height="12"/><use href="#s5" x="974" y="105" width="12" height="12"/>
<path d="M947,124.5h1.2M950,124.5h1.2M953,124.5h1.2" stroke="#555" stroke-width="1"/>

<rect x="905" y="129" width="90" height="118" fill="#b9babc"/>
<rect x="905" y="130" width="90" height="14" fill="url(#hd)"/>
<rect x="905" y="129" width="1" height="118" fill="#6a6a6a"/><rect x="994" y="129" width="1" height="118" fill="#6a6a6a"/>
<rect x="906" y="131" width="2" height="2" fill="#eee"/>
<rect x="906.5" y="137" width="17" height="7" fill="#bcbdbf"/>
<text x="911" y="142.5" font-size="4.3" fill="#444">Color</text>
<path d="M936,158 L978,183 L936,205Z" fill="url(#tw)"/>
<path d="M936,158 L978,183 L936,205Z" fill="url(#tr)"/>
<circle cx="913" cy="207" r="5.5" fill="#fff"/>
<circle cx="917.5" cy="213" r="6" fill="#2b1f20"/>
<circle cx="986.5" cy="208" r="2.6" fill="none" stroke="#222" stroke-width="1.3"/>
<path d="M985,210.5l-1.5,3h7l-1.5-3zM981.5,214h10.5v4h-10.5z" fill="#222"/>
<g fill="#555" font-size="4"><text x="908" y="228">R</text><text x="908" y="234">G</text><text x="908" y="240">B</text></g>
<path d="M912,226.5h14M912,232.5h10M912,238.5h10" stroke="#909092" stroke-width="1"/>
<circle cx="925.5" cy="226" r="1.7" fill="#fff"/><circle cx="922" cy="232" r="1.7" fill="#fff"/><circle cx="921.5" cy="238" r="1.7" fill="#fff"/>
<rect x="977" y="224" width="15" height="5" fill="#f6f6f6"/><rect x="977" y="230" width="15" height="5" fill="#f6f6f6"/><rect x="977" y="236" width="15" height="5" fill="#f6f6f6"/>
<g font-size="4" fill="#777"><text x="985" y="228.3">48</text><text x="985" y="234.3">32</text><text x="985" y="240.3">32</text></g>
<path d="M947,244.5h1.2M950,244.5h1.2M953,244.5h1.2" stroke="#555" stroke-width="1"/>

<rect x="905" y="247" width="90" height="92" fill="#b9babc"/>
<rect x="905" y="248" width="90" height="14" fill="url(#hd)"/>
<rect x="905" y="247" width="1" height="92" fill="#6a6a6a"/><rect x="994" y="247" width="1" height="92" fill="#6a6a6a"/>
<rect x="906" y="249" width="2" height="2" fill="#eee"/>
<rect x="906.5" y="254.5" width="20" height="7.5" fill="#bcbdbf"/>
<text x="911" y="260" font-size="4.3" fill="#444">Papers</text>
<rect x="908.5" y="266.5" width="48" height="48" rx="1.5" fill="#d4d4d6"/>
<g clip-path="url(#pclip)"><rect x="909" y="267" width="47" height="47" filter="url(#cl)"/></g>
<rect x="959" y="268" width="15" height="15" rx="1" fill="#7d7d7f"/>
<path d="M961,272 L967,269 L973,275 L970,282 L964,279Z" fill="#2e2e2e"/>
<g font-size="3.9" fill="#444"><text x="960" y="288.5">Toddlesburg</text><text x="962" y="293.5">W: 500 Px</text><text x="962" y="298.5">H: 500 Px</text></g>
<rect x="960" y="308" width="12" height="5.5" rx="1" fill="#a9bdea"/>
<path d="M961,310.5h3M965.5,309.5v3M968,310h3M968,312h3" stroke="#2558c2" stroke-width=".9"/>
<rect x="910" y="318" width="5" height="5" fill="#ccc" stroke="#555" stroke-width=".5"/>
<circle cx="912.5" cy="327" r="2.3" fill="#111"/><path d="M912.5,324.7a2.3,2.3 0 0 1 0,4.6z" fill="#fff"/>
<rect x="910" y="331.5" width="5" height="5" fill="#ccc" stroke="#777" stroke-width=".5"/>
<path d="M917,320.5h8M917,327h12M917,334h27" stroke="#909092" stroke-width="1"/>
<circle cx="923.5" cy="320.5" r="1.7" fill="#fff"/><circle cx="929.5" cy="327" r="1.7" fill="#fff"/><circle cx="945" cy="334" r="1.7" fill="#fff"/>
<rect x="977" y="318" width="15" height="5" fill="#f6f6f6"/><rect x="977" y="325" width="15" height="5" fill="#f6f6f6"/><rect x="977" y="332" width="15" height="5" fill="#f6f6f6"/>
<g font-size="4" fill="#777"><text x="982" y="322.3">08%</text><text x="982" y="329.3">91%</text><text x="982" y="336.3">32%</text></g>

<rect x="905" y="339" width="90" height="108" fill="#b9babc"/>
<rect x="905" y="340" width="90" height="5" fill="#8d8d8f"/>
<rect x="905" y="345" width="90" height="9" fill="url(#hd)"/>
<rect x="905" y="339" width="1" height="108" fill="#6a6a6a"/><rect x="993.5" y="339" width="1.5" height="108" fill="#6a6a6a"/>
<rect x="906" y="340.5" width="2" height="2" fill="#eee"/>
<rect x="906.5" y="346.5" width="34" height="7.5" fill="#bcbdbf"/>
<rect x="941" y="346.5" width="20" height="7.5" fill="#808082"/>
<text x="912" y="352" font-size="4.3" fill="#444">Favorite Papers</text>
<text x="942.5" y="352" font-size="4.3" fill="#c6c6c6">Star Flakes</text>
<g clip-path="url(#gclip)"><rect x="907" y="357" width="80" height="80" filter="url(#nz)"/></g>
<g opacity=".78">
<rect x="907" y="357" width="13" height="13" fill="#1e1e1e"/><rect x="920.3" y="357" width="13" height="13" fill="#6a6a6a"/><rect x="933.6" y="357" width="13" height="13" fill="#9a9a9a"/><rect x="947" y="357" width="13" height="13" fill="#3a3a3a"/><rect x="960.3" y="357" width="13" height="13" fill="#666"/><rect x="973.6" y="357" width="13" height="13" fill="#4e4e4e"/>
<rect x="907" y="370.3" width="13" height="13" fill="#2a2a2a"/><rect x="920.3" y="370.3" width="13" height="13" fill="#333"/><rect x="933.6" y="370.3" width="13" height="13" fill="#8e8e8e"/><rect x="947" y="370.3" width="13" height="13" fill="#1f1f1f"/><rect x="960.3" y="370.3" width="13" height="13" fill="#2f2f2f"/><rect x="973.6" y="370.3" width="13" height="13" fill="#4e4e4e"/>
<rect x="907" y="383.6" width="13" height="13" fill="#666"/><rect x="920.3" y="383.6" width="13" height="13" fill="#a4a4a4"/><rect x="933.6" y="383.6" width="13" height="13" fill="#aaa"/><rect x="947" y="383.6" width="13" height="13" fill="#333"/><rect x="960.3" y="383.6" width="13" height="13" fill="#6e6e6e"/><rect x="973.6" y="383.6" width="13" height="13" fill="#4e4e4e"/>
<rect x="907" y="397" width="13" height="13" fill="#3a3a3a"/><rect x="920.3" y="397" width="13" height="13" fill="#4e4e4e"/><rect x="933.6" y="397" width="13" height="13" fill="#969696"/><rect x="947" y="397" width="13" height="13" fill="#4e4e4e"/><rect x="960.3" y="397" width="13" height="13" fill="#7c7c7c"/><rect x="973.6" y="397" width="13" height="13" fill="#555"/>
<rect x="907" y="410.3" width="13" height="13" fill="#666"/><rect x="920.3" y="410.3" width="13" height="13" fill="#7a7a7a"/><rect x="933.6" y="410.3" width="13" height="13" fill="#7a7a7a"/><rect x="947" y="410.3" width="13" height="13" fill="#8e8e8e"/><rect x="960.3" y="410.3" width="13" height="13" fill="#707070"/><rect x="973.6" y="410.3" width="13" height="13" fill="#333"/>
<rect x="907" y="423.6" width="13" height="13" fill="#4e4e4e"/><rect x="920.3" y="423.6" width="13" height="13" fill="#7a7a7a"/><rect x="933.6" y="423.6" width="13" height="13" fill="#555"/>
</g>
<path d="M935,386 L946,385 L945,396 L941,397 L937,396 L940,392Z" fill="#fff"/><path d="M936,386 L942,388 L939,392 L935,391Z" fill="#000"/><path d="M935,395h3v2h-3z" fill="#000"/>
<path d="M907,356.5h80M907,370h80M907,383.4h80M907,396.8h80M907,410.1h80M907,423.4h80M907,436.8h40M920.1,357v80M933.4,357v80M946.8,357v80M960.1,357v66M973.4,357v66" stroke="#b3b3b5" stroke-width=".4"/>
<path d="M947,441.5h1.2M950,441.5h1.2M953,441.5h1.2" stroke="#555" stroke-width="1"/>

<rect x="905" y="447" width="89" height="178" rx="1" fill="#b9babc"/>
<rect x="905" y="447" width="89" height="6" fill="#8a8a8c"/>
<rect x="905" y="453" width="89" height="8" fill="url(#hd)"/>
<rect x="905" y="447" width="1.2" height="178" fill="#6a6a6a"/><rect x="992.8" y="447" width="1.4" height="178" fill="#6a6a6a"/><rect x="905" y="623" width="89" height="2" fill="#6a6a6a"/>
<rect x="906.5" y="448" width="2" height="2" fill="#eee"/>
<rect x="906.5" y="454" width="19" height="7" fill="#808082"/>
<rect x="926.5" y="454" width="18" height="7" fill="#bcbdbf"/>
<text x="908" y="459.5" font-size="4.3" fill="#c8c8c8">Channels</text>
<text x="931" y="459.5" font-size="4.3" fill="#444">Layers</text>
<rect x="908" y="465" width="39" height="6" rx="1" fill="#aeafb1"/><rect x="949" y="465" width="40" height="6" rx="1" fill="#aeafb1"/>
<text x="912" y="470" font-size="4.2" fill="#777">Default</text><text x="953" y="470" font-size="4.2" fill="#777">Ignore</text>
<path d="M945,466l-.8,1.2h1.6zM945,470l-.8-1.2h1.6zM987,466l-.8,1.2h1.6zM987,470l-.8-1.2h1.6z" fill="#666"/>
<rect x="910" y="473.5" width="4" height="4" fill="#b0b0b2" stroke="#666" stroke-width=".5"/><rect x="916" y="473.5" width="4" height="4" fill="#b0b0b2" stroke="#777" stroke-width=".5"/><rect x="920.5" y="473.5" width="4.5" height="4.5" fill="#9a9a9c" stroke="#444" stroke-width=".6"/>
<path d="M930,476h50" stroke="#aeafb1" stroke-width=".6"/>
<circle cx="950" cy="475.5" r="1.7" fill="#fff"/>
<rect x="975" y="473" width="15" height="5.5" rx="1" fill="#f2f2f2"/><text x="979" y="477.3" font-size="4" fill="#999">100%</text>
<rect x="907" y="482" width="84" height="130" fill="#fff"/>
<rect x="917" y="497" width="74" height="15" fill="#c5c6c8"/>
<rect x="907" y="497" width="10" height="15" fill="#f5f5f5"/>
<path d="M908,489.5 L911,487.5 L914,489.5 L911,491.5Z" fill="#222"/><path d="M908,504.5 L911,502.5 L914,504.5 L911,506.5Z" fill="#222"/>
<rect x="916.5" y="482.5" width="14" height="14" fill="#e8e8e8" stroke="#8b8b8b" stroke-width=".9"/>
<circle cx="920" cy="486" r="1.5" fill="#7b3a25"/>
<path d="M918,489h2v2h-2zM922,489h2v2h-2zM926,489h2v2h-2zM920,491h2v2h-2zM924,491h2v2h-2zM918,493h2v2h-2zM922,493h2v2h-2zM926,493h2v2h-2z" fill="#c8c8c8"/>
<rect x="916.5" y="497.5" width="14" height="14" fill="#fff" stroke="#8b8b8b" stroke-width=".9"/>
<text x="933" y="491.5" font-size="5" fill="#666">Layer 1</text>
<text x="933" y="506.5" font-size="5" fill="#555">Canvas</text>
<path d="M984,484.8h6M984,486.5h6" stroke="#555" stroke-width=".8"/>
<rect x="984.5" y="490" width="5" height="4.5" fill="#666"/><path d="M985.5,490v-1.5a1.5,1.5 0 0 1 3,0v1.5" fill="none" stroke="#666" stroke-width=".7"/>
<path d="M984,500.5 C986,499 988,499 990,500.5 C988,502 986,502 984,500.5Z" fill="none" stroke="#888" stroke-width=".5"/>
<rect x="907" y="612" width="84" height="11" fill="#b9babc"/>
<rect x="908" y="614.5" width="5" height="5" fill="#333"/><path d="M913,616 l2,-1 v4 l-2,-1z" fill="#333"/>
<circle cx="917.5" cy="616.5" r="1.8" fill="none" stroke="#555" stroke-width=".7"/><path d="M919,618l2,2" stroke="#555" stroke-width=".7"/>
<rect x="923" y="614" width="4.5" height="5" fill="none" stroke="#777" stroke-width=".6"/><rect x="925" y="616" width="4" height="4.5" fill="none" stroke="#777" stroke-width=".6"/>
<rect x="932" y="613.5" width="6.5" height="6.5" fill="#222"/><rect x="933.8" y="615.2" width="3" height="3" fill="#fff"/>
<rect x="943" y="616" width="5" height="4.5" fill="#888"/><path d="M944,616v-1.5a1.5,1.5 0 0 1 3,0v1.5" fill="none" stroke="#666" stroke-width=".7"/>
<rect x="985.5" y="614.5" width="4.5" height="6" fill="#8a8a8a" stroke="#444" stroke-width=".5"/><path d="M985,613.8h5.5" stroke="#444" stroke-width=".8"/>
<path d="M946,621.8h1.2M949,621.8h1.2M952,621.8h1.2" stroke="#444" stroke-width="1"/>

<circle cx="938.5" cy="202" r="2.2" fill="none" stroke="#222" stroke-width="1"/>
</g>
</svg>
<div id="wheel"></div>
<svg width="1005" height="629" viewBox="0 0 1005 629" xmlns="http://www.w3.org/2000/svg" style="pointer-events:none"><circle cx="928" cy="158.5" r="2.4" fill="none" stroke="#111" stroke-width="1.2"/></svg>
</body></html>
